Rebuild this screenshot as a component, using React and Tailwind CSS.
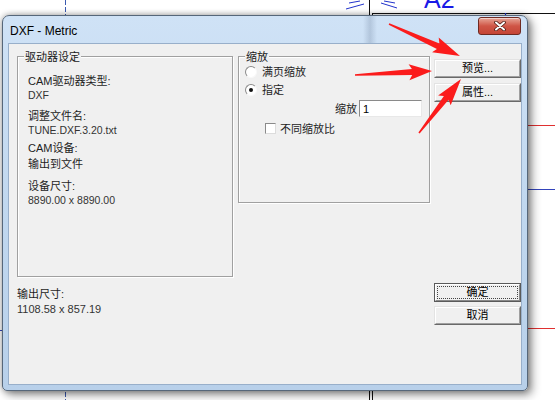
import React from "react";

function arrowPoints(tx, ty, hx, hy, w0, w1, L, W) {
  const dx = hx - tx, dy = hy - ty, len = Math.hypot(dx, dy);
  const ux = dx / len, uy = dy / len, nx = -uy, ny = ux;
  const bx = hx - ux * L, by = hy - uy * L;
  const pts = [
    [tx + (nx * w0) / 2, ty + (ny * w0) / 2],
    [bx + (nx * w1) / 2, by + (ny * w1) / 2],
    [bx - ux * 3 + nx * W, by - uy * 3 + ny * W],
    [hx, hy],
    [bx - ux * 3 - nx * W, by - uy * 3 - ny * W],
    [bx - (nx * w1) / 2, by - (ny * w1) / 2],
    [tx - (nx * w0) / 2, ty - (ny * w0) / 2],
  ];
  return pts.map((p) => p.map((v) => v.toFixed(1)).join(",")).join(" ");
}

function Btn({ children }) {
  return (
    <div className="h-[19px] w-[87px] border border-t-[#e3e3e3] border-l-[#e3e3e3] border-r-[#696969] border-b-[#696969] flex">
      <div className="flex-1 border border-t-white border-l-white border-r-[#a0a0a0] border-b-[#a0a0a0] bg-[#f0f0f0] flex items-center justify-center text-[11px] leading-[13px] text-black">
        {children}
      </div>
    </div>
  );
}

function DefBtn({ children }) {
  return (
    <div className="h-[19px] w-[87px] border border-[#5a5a5a] flex">
      <div className="flex-1 border border-t-white border-l-white border-r-[#8a8a8a] border-b-[#8a8a8a] bg-[#f0f0f0] flex p-[1px]">
        <div className="flex-1 border border-dotted border-[#444] flex items-center justify-center text-[11px] leading-[13px] text-black">
          {children}
        </div>
      </div>
    </div>
  );
}

function Radio({ checked }) {
  return (
    <div className="w-[12px] h-[12px] rounded-full border border-t-[#8a8a8a] border-l-[#8a8a8a] border-r-[#f8f8f8] border-b-[#f8f8f8] bg-white flex items-center justify-center">
      {checked && <div className="w-[4px] h-[4px] rounded-full bg-[#111]" />}
    </div>
  );
}

function Legend({ children }) {
  return (
    <div className="-mt-[7px] ml-[6px] self-start bg-[#f0f0f0] px-[1px] h-[14px] leading-[14px] text-[11px] text-[#1a1a1a]">
      {children}
    </div>
  );
}

const groupCls =
  "border border-[#a0a0a0] shadow-[inset_1px_1px_0_#fff,1px_1px_0_#fff] flex flex-col";

export default function App() {
  return (
    <div className="relative w-[555px] h-[400px] overflow-hidden bg-white font-['Liberation_Sans','Noto_Sans_CJK_SC',sans-serif]">
      {/* CAD drawing behind */}
      <svg className="absolute inset-0" width="555" height="400" viewBox="0 0 555 400">
        <line x1="65.5" y1="0" x2="65.5" y2="400" stroke="#3a5ab0" strokeWidth="1" strokeDasharray="5 2" />
        <line x1="369.5" y1="0" x2="369.5" y2="400" stroke="#111" strokeWidth="1" />
        <line x1="372.5" y1="13.5" x2="372.5" y2="400" stroke="#111" strokeWidth="1" />
        <line x1="372" y1="13.5" x2="555" y2="13.5" stroke="#111" strokeWidth="1" />
        <line x1="505.5" y1="13" x2="505.5" y2="18" stroke="#2233cc" strokeWidth="1.2" />
        <line x1="346" y1="9" x2="364" y2="4" stroke="#2233cc" strokeWidth="1" />
        <line x1="349" y1="3" x2="360" y2="1" stroke="#2233cc" strokeWidth="1" />
        <line x1="381" y1="3" x2="397" y2="8" stroke="#2233cc" strokeWidth="1" />
        <line x1="384" y1="1" x2="395" y2="3" stroke="#2233cc" strokeWidth="1" />
        <text x="424" y="8" fontSize="25" fill="#1a1ae6" fontFamily="Liberation Sans, sans-serif">A2</text>
        <line x1="520" y1="125.5" x2="555" y2="125.5" stroke="#e03030" strokeWidth="1" />
        <line x1="520" y1="189.5" x2="555" y2="189.5" stroke="#3344bb" strokeWidth="1" />
        <line x1="520" y1="328.5" x2="555" y2="328.5" stroke="#e03030" strokeWidth="1" />
        <line x1="0" y1="330.5" x2="5" y2="330.5" stroke="#3344bb" strokeWidth="1" />
      </svg>

      {/* Dialog window */}
      <div className="absolute left-[2px] top-[15px] w-[526px] h-[376px] rounded-t-[7px] rounded-b-[5px] border border-[#56677a] bg-gradient-to-b from-[#cfe2f6] via-[#c1d8ef] to-[#b8d0ea] shadow-[0_0_6px_rgba(0,0,0,0.35),4px_4px_10px_rgba(0,0,0,0.4)] flex flex-col">
        <div className="h-[27px] flex items-start justify-between bg-[linear-gradient(to_right,transparent_360px,rgba(80,100,130,0.22)_367px,transparent_374px)]">
          <div className="pl-[7px] pt-[8px] text-[12px] leading-[14px] text-black">DXF - Metric</div>
          <div className="mr-[6px] mt-[1px] w-[43px] h-[18px] rounded-[3px] border border-[#6e2a22] bg-gradient-to-b from-[#e6a497] via-[#cf5546] to-[#c44536] flex items-center justify-center shadow-[inset_0_1px_0_rgba(255,255,255,0.5)]">
            <svg width="12" height="10" viewBox="0 0 12 10">
              <path d="M2 1.5 L10 8.5 M10 1.5 L2 8.5" stroke="#4a1a14" strokeWidth="3.6" strokeLinecap="round" />
              <path d="M2 1.5 L10 8.5 M10 1.5 L2 8.5" stroke="#ffffff" strokeWidth="2" strokeLinecap="round" />
            </svg>
          </div>
        </div>

        <div className="mx-[5px] mb-[5px] flex-1 border border-[#98afca] bg-[#f0f0f0] flex flex-col pl-[8px] pt-[12px]">
          {/* top row */}
          <div className="flex items-start">
            {/* driver settings */}
            <div className={"w-[216px] h-[221px] " + groupCls}>
              <Legend>驱动器设定</Legend>
              <div className="pl-[10px] flex flex-col text-[11px] leading-[14px]">
                <div className="mt-[10px] h-[14px] text-[#1e1e1e]">CAM驱动器类型:</div>
                <div className="h-[14px] text-[10.5px] text-[#333]">DXF</div>
                <div className="mt-[7px] h-[14px] text-[#1e1e1e]">调整文件名:</div>
                <div className="h-[14px] text-[10.5px] text-[#333]">TUNE.DXF.3.20.txt</div>
                <div className="mt-[4px] h-[14px] text-[#1e1e1e]">CAM设备:</div>
                <div className="mt-[2px] h-[14px] text-[#1e1e1e]">输出到文件</div>
                <div className="mt-[8px] h-[14px] text-[#1e1e1e]">设备尺寸:</div>
                <div className="h-[14px] text-[10.5px] text-[#333]">8890.00 x 8890.00</div>
              </div>
            </div>

            {/* scale */}
            <div className={"ml-[5px] w-[192px] h-[147px] " + groupCls}>
              <Legend>缩放</Legend>
              <div className="flex flex-col text-[11px] leading-[14px] text-[#1e1e1e]">
                <div className="h-[16px] pl-[6px] flex items-center gap-[5px]">
                  <Radio />
                  <span>满页缩放</span>
                </div>
                <div className="mt-[2px] h-[16px] pl-[6px] flex items-center gap-[5px]">
                  <Radio checked />
                  <span>指定</span>
                </div>
                <div className="mt-[2px] h-[17px] pr-[7px] flex items-center justify-end gap-[2px]">
                  <span>缩放</span>
                  <div className="w-[63px] h-[17px] bg-white border border-t-[#8a8a8a] border-l-[#8a8a8a] border-r-[#e8e8e8] border-b-[#e8e8e8] flex items-center pl-[3px] text-[11px] text-black">
                    1
                  </div>
                </div>
                <div className="mt-[6px] h-[11px] pl-[26px] flex items-center gap-[4px]">
                  <div className="w-[11px] h-[11px] bg-white border border-t-[#8a8a8a] border-l-[#8a8a8a] border-r-[#dcdcdc] border-b-[#dcdcdc]" />
                  <span>不同缩放比</span>
                </div>
              </div>
            </div>

            {/* buttons */}
            <div className="ml-[4px] mt-[3px] flex flex-col gap-[5px]">
              <Btn>预览...</Btn>
              <Btn>属性...</Btn>
            </div>
          </div>

          {/* bottom row */}
          <div className="flex items-start justify-between">
            <div className="mt-[10px] flex flex-col text-[11px] leading-[14px]">
              <div className="h-[14px] text-[#1e1e1e]">输出尺寸:</div>
              <div className="mt-[1px] h-[14px] text-[#333]">1108.58 x 857.19</div>
            </div>
            <div className="mt-[6px] flex flex-col gap-[4px]">
              <DefBtn>确定</DefBtn>
              <Btn>取消</Btn>
            </div>
          </div>
        </div>
      </div>

      {/* red arrows overlay */}
      <svg className="absolute inset-0 pointer-events-none" width="555" height="400" viewBox="0 0 555 400">
        <polygon points={arrowPoints(389, 24, 460, 56, 1.5, 6, 24, 8)} fill="#fb1c1c" />
        <polygon points={arrowPoints(355, 75, 432, 71, 1.5, 6, 20, 8)} fill="#fb1c1c" />
        <polygon points={arrowPoints(419, 133, 461, 79, 1.5, 6, 24, 8)} fill="#fb1c1c" />
      </svg>
    </div>
  );
}
